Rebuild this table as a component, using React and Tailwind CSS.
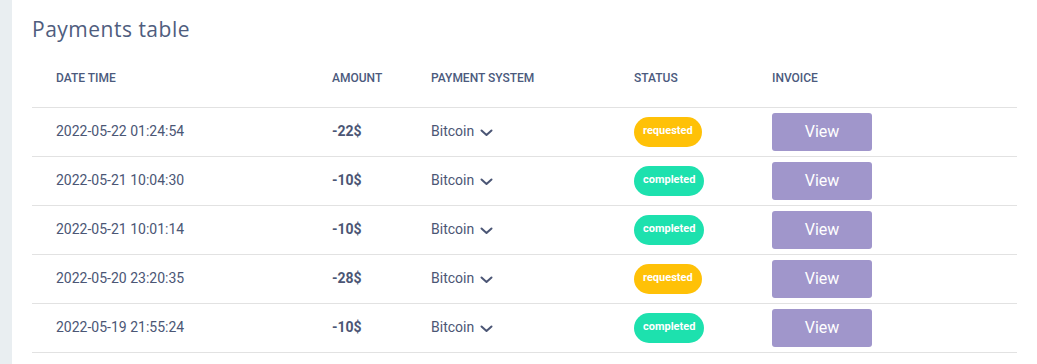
import React from "react";

const rows = [
  { dt: "2022-05-22 01:24:54", amt: "-22$", status: "requested" },
  { dt: "2022-05-21 10:04:30", amt: "-10$", status: "completed" },
  { dt: "2022-05-21 10:01:14", amt: "-10$", status: "completed" },
  { dt: "2022-05-20 23:20:35", amt: "-28$", status: "requested" },
  { dt: "2022-05-19 21:55:24", amt: "-10$", status: "completed" },
];

function Chevron() {
  return (
    <svg width="13" height="8" viewBox="0 0 13 8" className="ml-[6px] mt-[2px]">
      <path d="M1.5 1.5 L6.5 6 L11.5 1.5" fill="none" stroke="#4b5675" strokeWidth="2" strokeLinecap="round" strokeLinejoin="round" />
    </svg>
  );
}

export default function App() {
  return (
    <div className="flex min-h-[364px] w-[1037px] bg-[#e9eef1]" style={{ fontFamily: "Roboto, 'Liberation Sans', sans-serif" }}>
      <div className="ml-[12px] flex-1 bg-white pl-[20px] pr-[20px]">
        <h1
          className="pt-[15px] pb-[7px] text-[21px] leading-[28px] text-[#4f5d7e] tracking-[0.5px]"
          style={{ fontFamily: "'Open Sans', 'Liberation Sans', sans-serif" }}
        >
          Payments table
        </h1>
        <table className="w-[985px] border-collapse table-fixed">
          <colgroup>
            <col className="w-[276px]" />
            <col className="w-[99px]" />
            <col className="w-[203px]" />
            <col className="w-[138px]" />
            <col className="w-[269px]" />
          </colgroup>
          <thead>
            <tr className="h-[57px] border-b border-[#e2e2e2]">
              {["Date time", "Amount", "Payment system", "Status", "Invoice"].map((h) => (
                <th key={h} className="pl-[24px] text-left text-[12px] font-medium uppercase text-[#4b5a7d] align-middle pb-[1px]">
                  {h}
                </th>
              ))}
            </tr>
          </thead>
          <tbody>
            {rows.map((r, i) => (
              <tr key={i} className="h-[49px] border-b border-[#e2e2e2]">
                <td className="pl-[24px] text-[14px] text-[#4b5675]">{r.dt}</td>
                <td className="pl-[24px] text-[14px] font-bold text-[#4b5675]">{r.amt}</td>
                <td className="pl-[24px] text-[14px] text-[#4b5675]">
                  <div className="flex items-center">
                    <span>Bitcoin</span>
                    <Chevron />
                  </div>
                </td>
                <td className="pl-[24px]">
                  <span
                    className={
                      "inline-flex h-[30px] items-center rounded-full px-[9px] text-[11px] font-bold text-white " +
                      (r.status === "requested" ? "bg-[#ffc107]" : "bg-[#1de1ae]")
                    }
                  >
                    {r.status}
                  </span>
                </td>
                <td className="pl-[24px]">
                  <button className="flex h-[38px] w-[100px] items-center justify-center rounded-[3px] bg-[#a096cb] text-[16px] text-white">
                    View
                  </button>
                </td>
              </tr>
            ))}
          </tbody>
        </table>
      </div>
    </div>
  );
}
